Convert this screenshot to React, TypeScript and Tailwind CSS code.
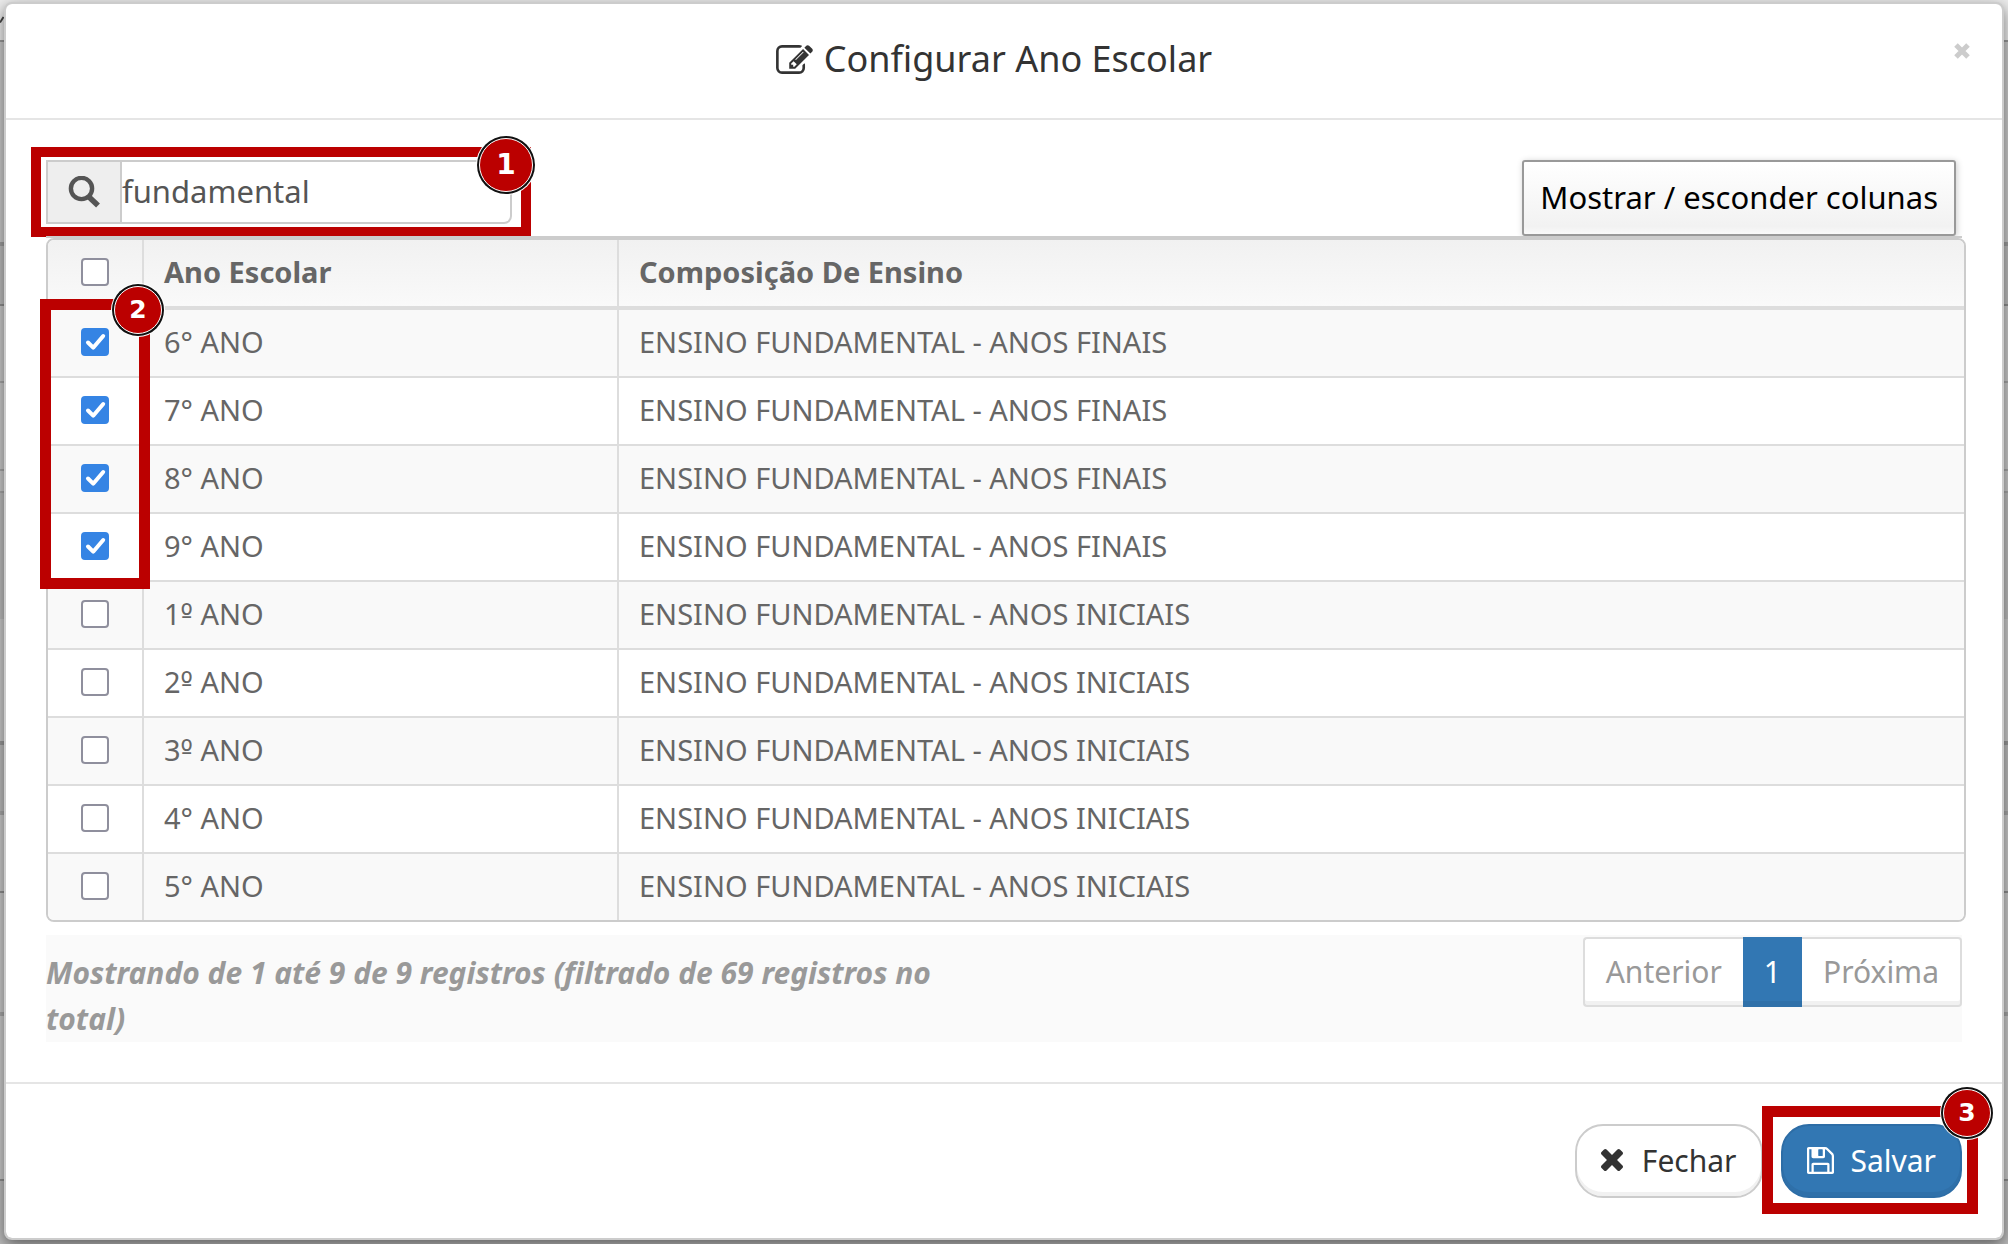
import { useState } from "react";

const GRADES = [
  { name: "6° ANO", stage: "ENSINO FUNDAMENTAL - ANOS FINAIS", on: true },
  { name: "7° ANO", stage: "ENSINO FUNDAMENTAL - ANOS FINAIS", on: true },
  { name: "8° ANO", stage: "ENSINO FUNDAMENTAL - ANOS FINAIS", on: true },
  { name: "9° ANO", stage: "ENSINO FUNDAMENTAL - ANOS FINAIS", on: true },
  { name: "1º ANO", stage: "ENSINO FUNDAMENTAL - ANOS INICIAIS", on: false },
  { name: "2º ANO", stage: "ENSINO FUNDAMENTAL - ANOS INICIAIS", on: false },
  { name: "3º ANO", stage: "ENSINO FUNDAMENTAL - ANOS INICIAIS", on: false },
  { name: "4° ANO", stage: "ENSINO FUNDAMENTAL - ANOS INICIAIS", on: false },
  { name: "5° ANO", stage: "ENSINO FUNDAMENTAL - ANOS INICIAIS", on: false },
];

function EditIcon() {
  return (
    <svg viewBox="0 128 1792 1408" className="h-[29px] w-[37px] fill-current" aria-hidden="true">
      <path d="M888 1184l116-116-152-152-116 116v56h96v96h56zm440-720q-16-16-33 1l-350 350q-17 17-1 33t33-1l350-350q17-17 1-33zm80 594v190q0 119-84.5 203.5t-203.5 84.5h-832q-119 0-203.5-84.5t-84.5-203.5v-832q0-119 84.5-203.5t203.5-84.5h832q63 0 117 25 15 7 18 23 3 17-9 29l-49 49q-14 14-32 8-23-6-45-6h-832q-66 0-113 47t-47 113v832q0 66 47 113t113 47h832q66 0 113-47t47-113v-126q0-13 9-22l64-64q15-15 35-7t20 29zm-96-738l288 288-672 672h-288v-288zm444 132l-92 92-288-288 92-92q28-28 68-28t68 28l152 152q28 28 28 68t-28 68z" />
    </svg>
  );
}

function SaveIcon() {
  return (
    <svg viewBox="128 128 1536 1536" className="size-[27px] fill-current" aria-hidden="true">
      <path d="M512 1536h768v-384h-768v384zm896 0h128v-896q0-14-10-38.5t-20-34.5l-281-281q-10-10-34-20t-39-10v416q0 40-28 68t-68 28h-576q-40 0-68-28t-28-68v-416h-128v1280h128v-416q0-40 28-68t68-28h832q40 0 68 28t28 68v416zm-384-928v-320q0-13-9.5-22.5t-22.5-9.5h-192q-13 0-22.5 9.5t-9.5 22.5v320q0 13 9.5 22.5t22.5 9.5h192q13 0 22.5-9.5t9.5-22.5zm640 32v928q0 40-28 68t-68 28h-1344q-40 0-68-28t-28-68v-1344q0-40 28-68t68-28h928q40 0 88 20t76 48l280 280q28 28 48 76t20 88z" />
    </svg>
  );
}

function TimesIcon() {
  return (
    <svg viewBox="302 366 1188 1188" className="size-[22px] fill-current" aria-hidden="true">
      <path d="M1490 1322q0 40-28 68l-136 136q-28 28-68 28t-68-28l-294-294-294 294q-28 28-68 28t-68-28l-136-136q-28-28-28-68t28-68l294-294-294-294q-28-28-28-68t28-68l136-136q28-28 68-28t68 28l294 294 294-294q28-28 68-28t68 28l136 136q28 28 28 68t-28 68l-294 294 294 294q28 28 28 68z" />
    </svg>
  );
}

function Tick({ label, initial }: { label: string; initial: boolean }) {
  const [on, setOn] = useState(initial);
  return (
    <span className="mx-auto grid size-7">
      <input
        type="checkbox"
        aria-label={label}
        checked={on}
        onChange={() => setOn(!on)}
        className="peer col-start-1 row-start-1 size-7 appearance-none rounded-[4px] border-2 border-[#8f8f9d] bg-white checked:border-[#3584e4] checked:bg-[#3584e4]"
      />
      <svg viewBox="0 0 28 28" className="pointer-events-none invisible col-start-1 row-start-1 size-7 peer-checked:visible" aria-hidden="true">
        <path d="M7 14.5l5.2 5.2L22.2 8" fill="none" stroke="white" strokeWidth="4" strokeLinecap="round" strokeLinejoin="round" />
      </svg>
    </span>
  );
}

/* The masculine ordinal is set in a face that draws it with its underline. */
function GradeName({ name }: { name: string }) {
  const at = name.indexOf("º");
  if (at < 0) return <>{name}</>;
  return (
    <>
      {name.slice(0, at)}
      <span className="font-['DejaVu_Sans_Condensed','DejaVu_Sans',sans-serif] leading-none">º</span>
      {name.slice(at + 1)}
    </>
  );
}

const BADGE =
  "absolute flex items-center justify-center rounded-full border border-white bg-[#bb0000] font-['DejaVu_Sans',sans-serif] font-bold text-white shadow-[0_0_0_2px_#111,0_0_0_3px_#fff]";

/* Blurred page behind the dialog, of which only thin strips stay visible. */
function Backdrop() {
  return (
    <div className="absolute inset-0 flex flex-col bg-[#cbcbcb]" aria-hidden="true">
      <div className="h-[42px] border-b-2 border-[#9a9a9a] bg-[#ededed]">
        <svg viewBox="0 0 4 8" className="mt-4 h-2 w-1">
          <path d="M0 6.5L3.5 1" stroke="#444" strokeWidth="2" />
        </svg>
      </div>
      <div className="h-[204px] border-b-4 border-[#9f9f9f]" />
      <div className="h-[60px] border-b-2 border-[#909090] bg-[#bdbdbd]" />
      <div className="h-[77px] border-b-2 border-[#a8a8a8]" />
      <div className="h-[88px] border-b-2 border-[#a8a8a8]" />
      <div className="h-[22px] border-b-2 border-[#a8a8a8]" />
      <div className="h-[126px] bg-[#bdbdbd]" />
      <div className="h-[126px] border-b-4 border-[#999]" />
      <div className="h-[70px] border-b-4 border-[#a8a8a8] bg-[#bdbdbd]" />
      <div className="h-[78px] border-b-2 border-[#909090]" />
      <div className="h-[123px] border-b-4 border-[#a8a8a8]" />
      <div className="h-[165px] border-b-2 border-[#909090]" />
      <div className="flex-1 bg-[#bdbdbd]" />
    </div>
  );
}

export default function App() {
  return (
    <div className="relative min-h-screen px-1 pt-0.5 pb-1 font-['Noto_Sans',sans-serif]">
      <Backdrop />
      <section
        role="dialog"
        aria-labelledby="dialog-title"
        className="relative rounded-lg border-2 border-[#ccc] bg-white bg-clip-padding shadow-[0_5px_15px_rgba(0,0,0,0.5)]"
      >
        <header className="relative border-b-2 border-[#e5e5e5] pt-[30px] pb-[34px]">
          <h1 id="dialog-title" className="flex items-center justify-center gap-[11px] pr-5 text-[36px] leading-[50px] text-[#333]">
            <EditIcon />
            Configurar Ano Escolar
          </h1>
          <button type="button" aria-label="Fechar janela" className="absolute top-[39px] right-8 text-[#ccc]">
            <svg viewBox="0 0 16 16" className="size-4" aria-hidden="true">
              <path d="M2 2l12 12M14 2L2 14" stroke="currentColor" strokeWidth="5" />
            </svg>
          </button>
        </header>

        <div className="p-10">
          <div className="flex items-start justify-between">
            <div className="relative flex h-16 w-[466px]">
              <label htmlFor="grade-search" aria-label="Buscar" className="flex w-[76px] items-center justify-center border-2 border-[#ccc] bg-[#eee]">
                <svg viewBox="0 0 32 32" className="size-8 text-[#555]" fill="none" stroke="currentColor" aria-hidden="true">
                  <circle cx="13.5" cy="12.5" r="10.6" strokeWidth="4.4" />
                  <path d="M20.5 20.5l9.5 9" strokeWidth="5.6" />
                </svg>
              </label>
              <input
                id="grade-search"
                type="text"
                defaultValue="fundamental"
                className="min-w-0 flex-1 rounded-r-lg border-y-2 border-r-2 border-[#ccc] bg-white pb-0.5 text-[31px] text-[#555] outline-none"
              />
              <div className="pointer-events-none absolute -top-[13px] -left-[15px] h-[90px] w-[500px] border-10 border-[#bb0000]">
                <span className={BADGE + " -top-[19px] -right-3 size-[54px] text-[28px]"}>1</span>
              </div>
            </div>
            <button
              type="button"
              className="mr-1.5 h-[76px] rounded-[3px] border-2 border-[#999] bg-linear-to-b from-white via-[#f2f2f2] via-90% to-[#fafafa] px-4 pb-0.5 text-[31px] text-black shadow-[1px_1px_6px_#ccc]"
            >
              Mostrar / esconder colunas
            </button>
          </div>

          <div className="relative border-t-2 border-[#ccc]">
            <div className="-mr-1 overflow-hidden rounded-lg border-2 border-[#ccc]">
              <table className="w-full table-fixed border-separate border-spacing-0 text-left text-[29px] leading-[42px] text-[#666]">
                <colgroup>
                  <col className="w-24" />
                  <col className="w-[475px]" />
                  <col />
                </colgroup>
                <thead>
                  <tr className="h-[70px] bg-linear-to-b from-[#f1f1f1] to-[#fafafa]">
                    <th className="border-r-2 border-b-4 border-[#ddd] pb-0.5">
                      <Tick label="Selecionar todos" initial={false} />
                    </th>
                    <th className="border-r-2 border-b-4 border-[#ddd] px-5 pb-0.5 font-bold">Ano Escolar</th>
                    <th className="border-b-4 border-[#ddd] px-5 pb-0.5 font-bold">Composição De Ensino</th>
                  </tr>
                </thead>
                <tbody>
                  {GRADES.map((g) => (
                    <tr key={g.name} className="group h-[68px] odd:bg-[#f9f9f9] even:bg-white last:h-[66px]">
                      <td className="border-r-2 border-b-2 border-[#ddd] pb-0.5 group-last:border-b-0">
                        <Tick label={g.name} initial={g.on} />
                      </td>
                      <td className="border-r-2 border-b-2 border-[#ddd] px-5 pb-0.5 group-last:border-b-0">
                        <GradeName name={g.name} />
                      </td>
                      <td className="border-b-2 border-[#ddd] px-5 pb-0.5 group-last:border-b-0">{g.stage}</td>
                    </tr>
                  ))}
                </tbody>
              </table>
            </div>
            <div className="pointer-events-none absolute top-[61px] -left-1.5 h-[290px] w-[110px] border-11 border-[#bb0000]">
              <span className={BADGE + " -top-6 -right-[23px] size-12 text-[25px]"}>2</span>
            </div>
          </div>

          <div className="mt-[13px] flex items-start justify-between bg-[#fafafa]">
            <p className="mt-[15px] w-[930px] text-[30px] leading-[46px] font-bold text-[#999] italic">
              Mostrando de 1 até 9 de 9 registros (filtrado de 69 registros no total)
            </p>
            <nav aria-label="Paginação" className="mt-0.5 flex h-[70px] items-stretch text-[30px] text-[#999]">
              <button type="button" className="rounded-l-[4px] border-y-2 border-l-2 border-[#ddd] bg-white px-[21px] pb-0.5 shadow-[inset_0_-4px_0_#f1f1f1]">
                Anterior
              </button>
              <button type="button" aria-current="page" className="border-b-[6px] border-[#2f70a9] bg-[#3277b3] px-[21px] pt-1 text-white">
                1
              </button>
              <button type="button" className="rounded-r-[4px] border-y-2 border-r-2 border-[#ddd] bg-white px-[21px] pb-0.5 shadow-[inset_0_-4px_0_#f1f1f1]">
                Próxima
              </button>
            </nav>
          </div>
        </div>

        <footer className="flex justify-end gap-[18px] border-t-2 border-[#e5e5e5] p-10">
          <button
            type="button"
            className="flex h-[74px] items-center gap-[19px] rounded-[28px] border-2 border-[#ccc] bg-white px-6 pb-0.5 text-[30px] text-[#333] shadow-[inset_0_-4px_0_#f1f1f1]"
          >
            <TimesIcon />
            Fechar
          </button>
          <div className="relative">
            <button
              type="button"
              className="flex h-[74px] items-center gap-[17px] rounded-[28px] border-2 border-[#2d6da6] bg-[#3277b3] px-6 pb-0.5 text-[30px] text-white shadow-[inset_0_-4px_0_#2f70a9]"
            >
              <SaveIcon />
              Salvar
            </button>
            <div className="pointer-events-none absolute -top-[18px] -right-4 -bottom-4 -left-[19px] border-11 border-[#bb0000]">
              <span className={BADGE + " -top-7 -right-[24px] size-12 text-[25px]"}>3</span>
            </div>
          </div>
        </footer>
      </section>
    </div>
  );
}
